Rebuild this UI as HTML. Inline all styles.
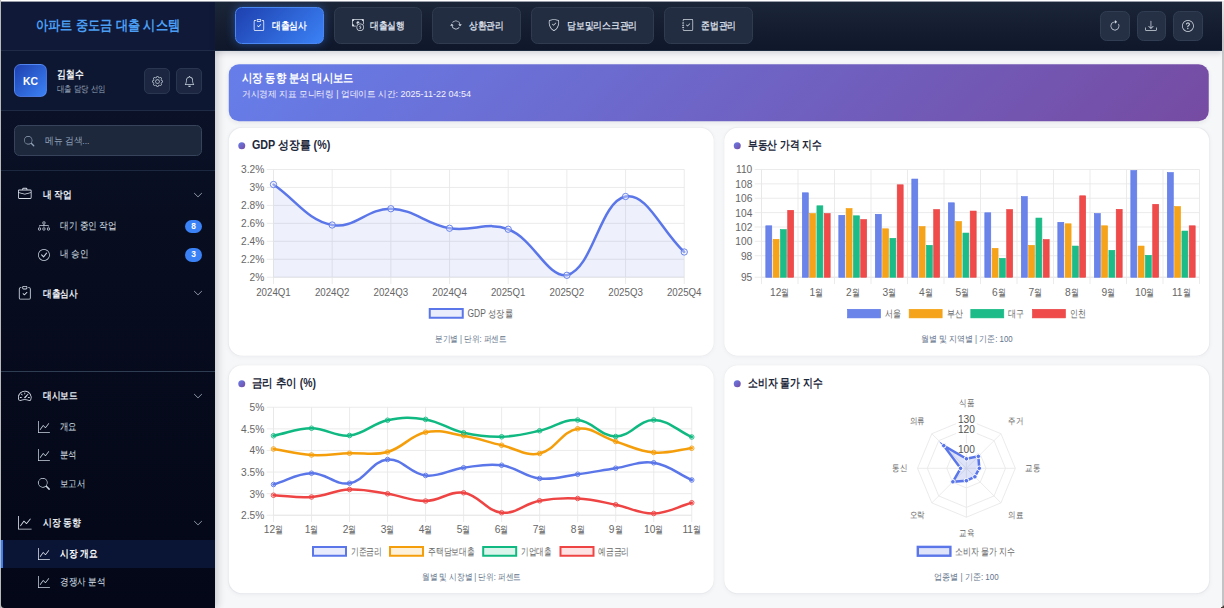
<!DOCTYPE html>
<html lang="ko">
<head>
<meta charset="utf-8">
<title>아파트 중도금 대출 시스템</title>
<style>
*{box-sizing:border-box;margin:0;padding:0}
html,body{width:1224px;height:608px;overflow:hidden}
body{position:relative;background:#f6f7f9;font-family:"Liberation Sans",sans-serif;color:#1e293b}
.abs,.t,.ic{position:absolute}
.t{white-space:nowrap}
.ic{display:block;overflow:visible}
#sidebar{left:1px;top:1px;width:214px;height:607px;background:linear-gradient(180deg,#0d1530 0%,#0b1228 18%,#080d20 35%,#030717 100%);box-shadow:2px 0 9px rgba(15,23,42,.22);border-bottom-left-radius:3.5px}
#sbhead{left:0;top:0;width:214px;height:50px;background:#101a38;border-bottom:1px solid #1f2b47}
#sbuser{left:0;top:50px;width:214px;height:60px;background:#0e1731;border-bottom:1px solid #1f2a44}
#sbsearch{left:0;top:110px;width:214px;height:60px;border-bottom:1px solid #1c2740}
#header{left:215px;top:1px;width:1007px;height:49.5px;background:linear-gradient(180deg,#1c2639 0%,#0f172a 100%);border-bottom:1px solid #1d2b41;box-shadow:0 2px 6px rgba(15,23,42,.17)}
.nb{position:absolute;top:6px;height:37px;border-radius:6.5px;background:#222d41;border:1px solid #303b50}
.nb.on{background:linear-gradient(135deg,#1e40af 0%,#3b82f6 100%);border:1px solid #4a87f3;box-shadow:0 0 10px rgba(59,130,246,.45)}
.hb{position:absolute;top:10px;width:29.5px;height:29.5px;border-radius:6.5px;background:#253045;border:1px solid #313d52}
.ub{position:absolute;top:17.5px;width:26px;height:26px;border-radius:5px;background:#1c2640;border:1px solid #2a354f}
.card{position:absolute;background:#fff;border-radius:13.6px;box-shadow:0 1px 4px rgba(15,23,42,.045),0 0 1px rgba(15,23,42,.04)}
.dot{position:absolute;width:7px;height:7px;border-radius:50%;background:linear-gradient(135deg,#667eea,#764ba2)}
.badge{position:absolute;left:184px;width:17.2px;height:13.4px;border-radius:7px;background:#3b82f6;color:#fff;font-size:8.4px;line-height:13.4px;font-weight:700;text-align:center}
svg text{font-family:"Liberation Sans",sans-serif}
</style>
</head>
<body>
<div class="abs" style="left:0;top:600px;width:6px;height:8px;background:#d2d2d3"></div>

<div id="sidebar" class="abs">
<div id="sbhead" class="abs"></div><div id="sbuser" class="abs"></div><div id="sbsearch" class="abs"></div>
<svg class="t" style="left:33.00px;top:14.12px" width="148.00" height="21.76"><text x="74.00" y="15.23" text-anchor="middle" font-size="13.60" font-weight="700" fill="#4b9ef3" textLength="144.00" lengthAdjust="spacingAndGlyphs">아파트 중도금 대출 시스템</text></svg>
<div class="abs" style="left:13.1px;top:63.3px;width:32.8px;height:32.8px;border-radius:6.5px;background:linear-gradient(135deg,#1e40af 0%,#3b82f6 100%);border:1px solid rgba(120,160,255,.45)"></div>
<svg class="t" style="left:20.00px;top:71.88px" width="19.00" height="16.64"><text x="9.50" y="12.01" text-anchor="middle" font-size="10.40" font-weight="700" fill="#fff" textLength="15.00" lengthAdjust="spacingAndGlyphs">KC</text></svg>
<svg class="t" style="left:54.20px;top:64.82px" width="30.30" height="16.96"><text x="2.00" y="11.87" text-anchor="start" font-size="10.60" font-weight="700" fill="#f1f5f9" textLength="26.30" lengthAdjust="spacingAndGlyphs">김철수</text></svg>
<svg class="t" style="left:54.20px;top:81.08px" width="52.80" height="14.24"><text x="2.00" y="9.97" text-anchor="start" font-size="8.90" font-weight="400" fill="#94a3b8" textLength="48.80" lengthAdjust="spacingAndGlyphs">대출 담당 선임</text></svg>
<div class="ub" style="left:143.2px;top:67.0px"></div>
<div class="ub" style="left:175.0px;top:67.0px"></div>
<svg class="ic" style="left:150.70px;top:74.50px" width="11.00" height="11.00" viewBox="0 0 16 16" fill="#cbd5e1"><path d="M8 4.754a3.246 3.246 0 1 0 0 6.492 3.246 3.246 0 0 0 0-6.492zM5.754 8a2.246 2.246 0 1 1 4.492 0 2.246 2.246 0 0 1-4.492 0z"/><path d="M9.796 1.343c-.527-1.79-3.065-1.79-3.592 0l-.094.319a.873.873 0 0 1-1.255.52l-.292-.16c-1.64-.892-3.433.902-2.54 2.541l.159.292a.873.873 0 0 1-.52 1.255l-.319.094c-1.79.527-1.79 3.065 0 3.592l.319.094a.873.873 0 0 1 .52 1.255l-.16.292c-.892 1.64.901 3.434 2.541 2.54l.292-.159a.873.873 0 0 1 1.255.52l.094.319c.527 1.79 3.065 1.79 3.592 0l.094-.319a.873.873 0 0 1 1.255-.52l.292.16c1.64.893 3.434-.902 2.54-2.541l-.159-.292a.873.873 0 0 1 .52-1.255l.319-.094c1.79-.527 1.79-3.065 0-3.592l-.319-.094a.873.873 0 0 1-.52-1.255l.16-.292c.893-1.64-.902-3.433-2.541-2.54l-.292.159a.873.873 0 0 1-1.255-.52l-.094-.319zm-2.633.283c.246-.835 1.428-.835 1.674 0l.094.319a1.873 1.873 0 0 0 2.693 1.115l.291-.16c.764-.415 1.6.42 1.184 1.185l-.159.292a1.873 1.873 0 0 0 1.116 2.692l.318.094c.835.246.835 1.428 0 1.674l-.319.094a1.873 1.873 0 0 0-1.115 2.693l.16.291c.415.764-.42 1.6-1.185 1.184l-.291-.159a1.873 1.873 0 0 0-2.693 1.116l-.094.318c-.246.835-1.428.835-1.674 0l-.094-.319a1.873 1.873 0 0 0-2.692-1.115l-.292.16c-.764.415-1.6-.42-1.184-1.185l.159-.291A1.873 1.873 0 0 0 1.945 8.93l-.319-.094c-.835-.246-.835-1.428 0-1.674l.319-.094A1.873 1.873 0 0 0 3.06 4.377l-.16-.292c-.415-.764.42-1.6 1.185-1.184l.292.159a1.873 1.873 0 0 0 2.692-1.115l.094-.319z"/></svg>
<svg class="ic" style="left:182.50px;top:74.50px" width="11.00" height="11.00" viewBox="0 0 16 16" fill="#cbd5e1"><path d="M8 16a2 2 0 0 0 2-2H6a2 2 0 0 0 2 2zM8 1.918l-.797.161A4.002 4.002 0 0 0 4 6c0 .628-.134 2.197-.459 3.742-.16.767-.376 1.566-.663 2.258h10.244c-.287-.692-.502-1.49-.663-2.258C12.134 8.197 12 6.628 12 6a4.002 4.002 0 0 0-3.203-3.92L8 1.917zM14.22 12c.223.447.481.801.78 1H1c.299-.199.557-.553.78-1C2.68 10.2 3 6.88 3 6c0-2.42 1.72-4.44 4.005-4.901a1 1 0 1 1 1.99 0A5.002 5.002 0 0 1 13 6c0 .88.32 4.2 1.22 6z"/></svg>
<div class="abs" style="left:13.0px;top:124.0px;width:188px;height:31.4px;border-radius:5.5px;background:#1d283d;border:1px solid #36435a"></div>
<svg class="ic" style="left:22.80px;top:134.50px" width="10.40" height="10.40" viewBox="0 0 16 16" fill="#94a3b8"><path d="M11.742 10.344a6.5 6.5 0 1 0-1.397 1.398h-.001c.03.04.062.078.098.115l3.85 3.85a1 1 0 0 0 1.415-1.414l-3.85-3.85a1.007 1.007 0 0 0-.115-.1zM12 6.5a5.5 5.5 0 1 1-11 0 5.5 5.5 0 0 1 11 0z"/></svg>
<svg class="t" style="left:41.50px;top:131.66px" width="48.50" height="15.68"><text x="2.00" y="10.98" text-anchor="start" font-size="9.80" font-weight="400" fill="#94a3b8" textLength="44.50" lengthAdjust="spacingAndGlyphs">메뉴 검색...</text></svg>
<svg class="ic" style="left:17.00px;top:186.40px" width="13.60" height="13.60" viewBox="0 0 16 16" fill="#d5dce6"><path d="M6.5 1A1.5 1.5 0 0 0 5 2.5V3H1.500A1.500 1.500 0 0 0 0 4.500v8A1.500 1.500 0 0 0 1.500 14h13a1.500 1.500 0 0 0 1.500-1.500v-8A1.500 1.500 0 0 0 14.500 3H11v-.5A1.500 1.500 0 0 0 9.500 1h-3zm0 1h3a.5.5 0 0 1 .5.5V3H6v-.5a.5.5 0 0 1 .5-.5zm1.886 6.914L15 7.151V12.500a.5.5 0 0 1-.5.5h-13a.5.5 0 0 1-.5-.5V7.150l6.614 1.764a1.500 1.500 0 0 0 .772 0zM1.500 4h13a.5.5 0 0 1 .5.5v1.616L8.129 7.948a.5.5 0 0 1-.258 0L1 6.116V4.500a.5.5 0 0 1 .5-.5z"/></svg>
<svg class="t" style="left:40.00px;top:184.96px" width="32.60" height="16.48"><text x="2.00" y="11.54" text-anchor="start" font-size="10.30" font-weight="600" fill="#e8edf3" textLength="28.60" lengthAdjust="spacingAndGlyphs">내 작업</text></svg>
<svg class="ic" style="left:192.00px;top:188.50px" width="10.00" height="10.00" viewBox="0 0 16 16" fill="#c3ccd9"><path fill-rule="evenodd" d="M1.646 4.646a.5.5 0 0 1 .708 0L8 10.293l5.646-5.647a.5.5 0 0 1 .708.708l-6 6a.5.5 0 0 1-.708 0l-6-6a.5.5 0 0 1 0-.708z"/></svg>
<svg class="ic" style="left:37.05px;top:218.85px" width="11.90" height="11.90" viewBox="0 0 16 16" fill="#cbd5e1"><path fill-rule="evenodd" d="M6 3.500A1.500 1.500 0 0 1 7.500 2h1A1.500 1.500 0 0 1 10 3.500v1A1.500 1.500 0 0 1 8.500 6v1H14a.5.5 0 0 1 .5.5v1a.5.5 0 0 1-1 0V8h-5v.5a.5.5 0 0 1-1 0V8h-5v.5a.5.5 0 0 1-1 0v-1A.5.5 0 0 1 2 7h5.500V6A1.500 1.500 0 0 1 6 4.500v-1zM8.500 5a.5.5 0 0 0 .5-.5v-1a.5.5 0 0 0-.5-.5h-1a.5.5 0 0 0-.5.5v1a.5.5 0 0 0 .5.5h1zM0 11.500A1.500 1.500 0 0 1 1.500 10h1A1.500 1.500 0 0 1 4 11.500v1A1.500 1.500 0 0 1 2.500 14h-1A1.500 1.500 0 0 1 0 12.500v-1zm1.500-.5a.5.5 0 0 0-.5.5v1a.5.5 0 0 0 .5.5h1a.5.5 0 0 0 .5-.5v-1a.5.5 0 0 0-.5-.5h-1zm4.500.5A1.500 1.500 0 0 1 7.500 10h1a1.500 1.500 0 0 1 1.500 1.500v1A1.500 1.500 0 0 1 8.500 14h-1A1.500 1.500 0 0 1 6 12.500v-1zm1.500-.5a.5.5 0 0 0-.5.5v1a.5.5 0 0 0 .5.5h1a.5.5 0 0 0 .5-.5v-1a.5.5 0 0 0-.5-.5h-1zm4.500.5a1.500 1.500 0 0 1 1.500-1.500h1a1.500 1.500 0 0 1 1.500 1.500v1a1.500 1.500 0 0 1-1.500 1.500h-1a1.500 1.500 0 0 1-1.500-1.500v-1zm1.500-.5a.5.5 0 0 0-.5.5v1a.5.5 0 0 0 .5.5h1a.5.5 0 0 0 .5-.5v-1a.5.5 0 0 0-.5-.5h-1z"/></svg>
<svg class="t" style="left:56.70px;top:216.64px" width="60.80" height="16.32"><text x="2.00" y="11.42" text-anchor="start" font-size="10.20" font-weight="500" fill="#dbe2ec" textLength="56.80" lengthAdjust="spacingAndGlyphs">대기 중인 작업</text></svg>
<div class="badge" style="top:218.50px">8</div>
<svg class="ic" style="left:37.05px;top:247.55px" width="11.90" height="11.90" viewBox="0 0 16 16" fill="#cbd5e1"><path d="M8 15A7 7 0 1 1 8 1a7 7 0 0 1 0 14zm0 1A8 8 0 1 0 8 0a8 8 0 0 0 0 16z"/><path d="M10.97 4.97a.235.235 0 0 0-.02.022L7.477 9.417 5.384 7.323a.75.75 0 0 0-1.06 1.06L6.97 11.03a.75.75 0 0 0 1.079-.02l3.992-4.99a.75.75 0 0 0-1.071-1.05z"/></svg>
<svg class="t" style="left:56.70px;top:245.34px" width="32.20" height="16.32"><text x="2.00" y="11.42" text-anchor="start" font-size="10.20" font-weight="500" fill="#dbe2ec" textLength="28.20" lengthAdjust="spacingAndGlyphs">내 승인</text></svg>
<div class="badge" style="top:247.20px">3</div>
<svg class="ic" style="left:17.00px;top:285.20px" width="13.60" height="13.60" viewBox="0 0 16 16" fill="#d5dce6"><path fill-rule="evenodd" d="M10.854 7.146a.5.5 0 0 1 0 .708l-3 3a.5.5 0 0 1-.708 0l-1.500-1.500a.5.5 0 1 1 .708-.708L7.500 9.793l2.646-2.647a.5.5 0 0 1 .708 0z"/><path d="M4 1.500H3a2 2 0 0 0-2 2V14a2 2 0 0 0 2 2h10a2 2 0 0 0 2-2V3.500a2 2 0 0 0-2-2h-1v1h1a1 1 0 0 1 1 1V14a1 1 0 0 1-1 1H3a1 1 0 0 1-1-1V3.500a1 1 0 0 1 1-1h1v-1z"/><path d="M9.500 1a.5.5 0 0 1 .5.5v1a.5.5 0 0 1-.5.5h-3a.5.5 0 0 1-.5-.5v-1a.5.5 0 0 1 .5-.5h3zm-3-1A1.500 1.500 0 0 0 5 1.500v1A1.500 1.500 0 0 0 6.500 4h3A1.500 1.500 0 0 0 11 2.500v-1A1.500 1.500 0 0 0 9.500 0h-3z"/></svg>
<svg class="t" style="left:40.00px;top:283.76px" width="38.60" height="16.48"><text x="2.00" y="11.54" text-anchor="start" font-size="10.30" font-weight="600" fill="#e8edf3" textLength="34.60" lengthAdjust="spacingAndGlyphs">대출심사</text></svg>
<svg class="ic" style="left:192.00px;top:287.30px" width="10.00" height="10.00" viewBox="0 0 16 16" fill="#c3ccd9"><path fill-rule="evenodd" d="M1.646 4.646a.5.5 0 0 1 .708 0L8 10.293l5.646-5.647a.5.5 0 0 1 .708.708l-6 6a.5.5 0 0 1-.708 0l-6-6a.5.5 0 0 1 0-.708z"/></svg>
<div class="abs" style="left:0;top:370.0px;width:214px;height:1px;background:#2f3d52"></div>
<svg class="ic" style="left:17.00px;top:387.50px" width="13.60" height="13.60" viewBox="0 0 16 16" fill="#d5dce6"><path d="M8 4a.5.5 0 0 1 .5.5V6a.5.5 0 0 1-1 0V4.500A.5.5 0 0 1 8 4zM3.732 5.732a.5.5 0 0 1 .707 0l.915.914a.5.5 0 1 1-.708.708l-.914-.915a.5.5 0 0 1 0-.707zM2 10a.5.5 0 0 1 .5-.5h1.586a.5.5 0 0 1 0 1H2.500A.5.5 0 0 1 2 10zm9.500 0a.5.5 0 0 1 .5-.5h1.500a.5.5 0 0 1 0 1H12a.5.5 0 0 1-.5-.5zm.754-4.246a.389.389 0 0 0-.527-.02L7.547 9.310a.91.91 0 1 0 1.302 1.258l3.434-4.297a.389.389 0 0 0-.029-.518z"/><path fill-rule="evenodd" d="M0 10a8 8 0 1 1 15.547 2.661c-.442 1.253-1.845 1.602-2.932 1.250C11.309 13.488 9.475 13 8 13c-1.474 0-3.310.488-4.615.911-1.087.352-2.490.003-2.932-1.250A7.988 7.988 0 0 1 0 10zm8-7a7 7 0 0 0-6.603 9.329c.203.575.923.876 1.680.630C4.397 12.533 6.358 12 8 12s3.604.532 4.923.960c.757.245 1.477-.056 1.680-.631A7 7 0 0 0 8 3z"/></svg>
<svg class="t" style="left:40.00px;top:386.06px" width="38.60" height="16.48"><text x="2.00" y="11.54" text-anchor="start" font-size="10.30" font-weight="600" fill="#e8edf3" textLength="34.60" lengthAdjust="spacingAndGlyphs">대시보드</text></svg>
<svg class="ic" style="left:192.00px;top:389.60px" width="10.00" height="10.00" viewBox="0 0 16 16" fill="#c3ccd9"><path fill-rule="evenodd" d="M1.646 4.646a.5.5 0 0 1 .708 0L8 10.293l5.646-5.647a.5.5 0 0 1 .708.708l-6 6a.5.5 0 0 1-.708 0l-6-6a.5.5 0 0 1 0-.708z"/></svg>
<svg class="ic" style="left:37.05px;top:419.85px" width="11.90" height="11.90" viewBox="0 0 16 16" fill="#cbd5e1"><path fill-rule="evenodd" d="M0 0h1v15h15v1H0V0Zm14.817 3.113a.5.5 0 0 1 .07.704l-4.500 5.500a.5.5 0 0 1-.74.037L7.060 6.767l-3.656 5.027a.5.5 0 0 1-.808-.588l4-5.500a.5.5 0 0 1 .758-.06l2.609 2.610 4.150-5.073a.5.5 0 0 1 .704-.07Z"/></svg>
<svg class="t" style="left:56.70px;top:417.64px" width="20.80" height="16.32"><text x="2.00" y="11.42" text-anchor="start" font-size="10.20" font-weight="500" fill="#dbe2ec" textLength="16.80" lengthAdjust="spacingAndGlyphs">개요</text></svg>
<svg class="ic" style="left:37.05px;top:448.35px" width="11.90" height="11.90" viewBox="0 0 16 16" fill="#cbd5e1"><path fill-rule="evenodd" d="M0 0h1v15h15v1H0V0Zm14.817 3.113a.5.5 0 0 1 .07.704l-4.500 5.500a.5.5 0 0 1-.74.037L7.060 6.767l-3.656 5.027a.5.5 0 0 1-.808-.588l4-5.500a.5.5 0 0 1 .758-.06l2.609 2.610 4.150-5.073a.5.5 0 0 1 .704-.07Z"/></svg>
<svg class="t" style="left:56.70px;top:446.14px" width="20.80" height="16.32"><text x="2.00" y="11.42" text-anchor="start" font-size="10.20" font-weight="500" fill="#dbe2ec" textLength="16.80" lengthAdjust="spacingAndGlyphs">분석</text></svg>
<svg class="ic" style="left:37.05px;top:476.85px" width="11.90" height="11.90" viewBox="0 0 16 16" fill="#cbd5e1"><path d="M11.742 10.344a6.5 6.5 0 1 0-1.397 1.398h-.001c.03.04.062.078.098.115l3.85 3.85a1 1 0 0 0 1.415-1.414l-3.85-3.85a1.007 1.007 0 0 0-.115-.1zM12 6.5a5.5 5.5 0 1 1-11 0 5.5 5.5 0 0 1 11 0z"/></svg>
<svg class="t" style="left:56.70px;top:474.64px" width="29.40" height="16.32"><text x="2.00" y="11.42" text-anchor="start" font-size="10.20" font-weight="500" fill="#dbe2ec" textLength="25.40" lengthAdjust="spacingAndGlyphs">보고서</text></svg>
<svg class="ic" style="left:17.00px;top:514.70px" width="13.60" height="13.60" viewBox="0 0 16 16" fill="#d5dce6"><path fill-rule="evenodd" d="M0 0h1v15h15v1H0V0Zm14.817 3.113a.5.5 0 0 1 .07.704l-4.500 5.500a.5.5 0 0 1-.74.037L7.060 6.767l-3.656 5.027a.5.5 0 0 1-.808-.588l4-5.500a.5.5 0 0 1 .758-.06l2.609 2.610 4.150-5.073a.5.5 0 0 1 .704-.07Z"/></svg>
<svg class="t" style="left:40.00px;top:513.26px" width="41.90" height="16.48"><text x="2.00" y="11.54" text-anchor="start" font-size="10.30" font-weight="600" fill="#e8edf3" textLength="37.90" lengthAdjust="spacingAndGlyphs">시장 동향</text></svg>
<svg class="ic" style="left:192.00px;top:516.80px" width="10.00" height="10.00" viewBox="0 0 16 16" fill="#c3ccd9"><path fill-rule="evenodd" d="M1.646 4.646a.5.5 0 0 1 .708 0L8 10.293l5.646-5.647a.5.5 0 0 1 .708.708l-6 6a.5.5 0 0 1-.708 0l-6-6a.5.5 0 0 1 0-.708z"/></svg>
<div class="abs" style="left:0;top:538.70px;width:214px;height:28.6px;background:#0a1434"></div>
<div class="abs" style="left:0;top:538.70px;width:2.4px;height:28.6px;background:#3b82f6"></div>
<svg class="ic" style="left:37.05px;top:547.05px" width="11.90" height="11.90" viewBox="0 0 16 16" fill="#e2e8f0"><path fill-rule="evenodd" d="M0 0h1v15h15v1H0V0Zm14.817 3.113a.5.5 0 0 1 .07.704l-4.500 5.500a.5.5 0 0 1-.74.037L7.060 6.767l-3.656 5.027a.5.5 0 0 1-.808-.588l4-5.500a.5.5 0 0 1 .758-.06l2.609 2.610 4.150-5.073a.5.5 0 0 1 .704-.07Z"/></svg>
<svg class="t" style="left:56.70px;top:544.84px" width="41.20" height="16.32"><text x="2.00" y="11.42" text-anchor="start" font-size="10.20" font-weight="700" fill="#ffffff" textLength="37.20" lengthAdjust="spacingAndGlyphs">시장 개요</text></svg>
<svg class="ic" style="left:37.05px;top:575.35px" width="11.90" height="11.90" viewBox="0 0 16 16" fill="#cbd5e1"><path fill-rule="evenodd" d="M0 0h1v15h15v1H0V0Zm14.817 3.113a.5.5 0 0 1 .07.704l-4.500 5.500a.5.5 0 0 1-.74.037L7.060 6.767l-3.656 5.027a.5.5 0 0 1-.808-.588l4-5.500a.5.5 0 0 1 .758-.06l2.609 2.610 4.150-5.073a.5.5 0 0 1 .704-.07Z"/></svg>
<svg class="t" style="left:56.70px;top:573.14px" width="49.40" height="16.32"><text x="2.00" y="11.42" text-anchor="start" font-size="10.20" font-weight="500" fill="#dbe2ec" textLength="45.40" lengthAdjust="spacingAndGlyphs">경쟁사 분석</text></svg>
</div>
<div id="header" class="abs">
<div class="nb on" style="left:20.00px;width:89.20px"></div>
<svg class="ic" style="left:37.55px;top:18.25px" width="11.90" height="11.90" viewBox="0 0 16 16" fill="#fff"><path fill-rule="evenodd" d="M10.854 7.146a.5.5 0 0 1 0 .708l-3 3a.5.5 0 0 1-.708 0l-1.500-1.500a.5.5 0 1 1 .708-.708L7.500 9.793l2.646-2.647a.5.5 0 0 1 .708 0z"/><path d="M4 1.500H3a2 2 0 0 0-2 2V14a2 2 0 0 0 2 2h10a2 2 0 0 0 2-2V3.500a2 2 0 0 0-2-2h-1v1h1a1 1 0 0 1 1 1V14a1 1 0 0 1-1 1H3a1 1 0 0 1-1-1V3.500a1 1 0 0 1 1-1h1v-1z"/><path d="M9.500 1a.5.5 0 0 1 .5.5v1a.5.5 0 0 1-.5.5h-3a.5.5 0 0 1-.5-.5v-1a.5.5 0 0 1 .5-.5h3zm-3-1A1.500 1.500 0 0 0 5 1.500v1A1.500 1.500 0 0 0 6.500 4h3A1.500 1.500 0 0 0 11 2.500v-1A1.500 1.500 0 0 0 9.500 0h-3z"/></svg>
<svg class="t" style="left:54.70px;top:16.52px" width="38.90" height="16.16"><text x="2.00" y="11.31" text-anchor="start" font-size="10.10" font-weight="700" fill="#fff" textLength="34.90" lengthAdjust="spacingAndGlyphs">대출심사</text></svg>
<div class="nb" style="left:118.90px;width:88.30px"></div>
<svg class="ic" style="left:136.55px;top:18.25px" width="11.90" height="11.90" viewBox="0 0 16 16" fill="#d3dae4"><path fill-rule="evenodd" d="M11 15a4 4 0 1 0 0-8 4 4 0 0 0 0 8zm5-4a5 5 0 1 1-10 0 5 5 0 0 1 10 0z"/><path d="M9.438 11.944c.047.596.518 1.06 1.363 1.116v.44h.375v-.443c.875-.061 1.386-.529 1.386-1.207 0-.618-.39-.936-1.09-1.100l-.296-.07v-1.200c.376.043.614.248.671.532h.658c-.047-.575-.54-1.024-1.329-1.073V8.500h-.375v.45c-.747.073-1.255.522-1.255 1.158 0 .562.378.92 1.007 1.066l.248.061v1.272c-.384-.058-.639-.27-.696-.563h-.668zm1.360-1.354c-.369-.085-.569-.26-.569-.522 0-.294.216-.514.572-.578v1.100h-.003zm.432.746c.449.104.655.272.655.569 0 .339-.257.571-.709.614v-1.195l.054.012z"/><path d="M1 0a1 1 0 0 0-1 1v8a1 1 0 0 0 1 1h4.083c.058-.344.145-.678.258-1H3a2 2 0 0 0-2-2V3a2 2 0 0 0 2-2h10a2 2 0 0 0 2 2v3.528c.38.34.717.728 1 1.154V1a1 1 0 0 0-1-1H1z"/><path d="M9.998 5.083 10 5a2 2 0 1 0-3.132 1.650 5.982 5.982 0 0 1 3.130-1.567z"/></svg>
<svg class="t" style="left:153.40px;top:16.52px" width="38.80" height="16.16"><text x="2.00" y="11.31" text-anchor="start" font-size="10.10" font-weight="600" fill="#d3dae4" textLength="34.80" lengthAdjust="spacingAndGlyphs">대출실행</text></svg>
<div class="nb" style="left:217.20px;width:88.70px"></div>
<svg class="ic" style="left:234.75px;top:18.25px" width="11.90" height="11.90" viewBox="0 0 16 16" fill="#d3dae4"><path d="M11.534 7h3.932a.25.25 0 0 1 .192.41l-1.966 2.360a.25.25 0 0 1-.384 0l-1.966-2.360a.25.25 0 0 1 .192-.41zm-11 2h3.932a.25.25 0 0 0 .192-.41L2.692 6.230a.25.25 0 0 0-.384 0L.342 8.590A.25.25 0 0 0 .534 9z"/><path fill-rule="evenodd" d="M8 3c-1.552 0-2.940.707-3.857 1.818a.5.5 0 1 1-.771-.636A6.002 6.002 0 0 1 13.917 7H12.900A5.002 5.002 0 0 0 8 3zM3.100 9a5.002 5.002 0 0 0 8.757 2.182.5.5 0 1 1 .771.636A6.002 6.002 0 0 1 2.083 9H3.100z"/></svg>
<svg class="t" style="left:252.00px;top:16.52px" width="38.70" height="16.16"><text x="2.00" y="11.31" text-anchor="start" font-size="10.10" font-weight="600" fill="#d3dae4" textLength="34.70" lengthAdjust="spacingAndGlyphs">상환관리</text></svg>
<div class="nb" style="left:315.80px;width:123.30px"></div>
<svg class="ic" style="left:333.05px;top:18.25px" width="11.90" height="11.90" viewBox="0 0 16 16" fill="#d3dae4"><path d="M5.338 1.590a61.440 61.440 0 0 0-2.837.856.481.481 0 0 0-.328.39c-.554 4.157.726 7.190 2.253 9.188a10.725 10.725 0 0 0 2.287 2.233c.346.244.652.42.893.533.12.057.218.095.293.118a.55.55 0 0 0 .101.025.615.615 0 0 0 .1-.025c.076-.023.174-.061.294-.118.24-.113.547-.29.893-.533a10.726 10.726 0 0 0 2.287-2.233c1.527-1.997 2.807-5.031 2.253-9.188a.48.48 0 0 0-.328-.39c-.651-.213-1.750-.56-2.837-.855C9.552 1.290 8.531 1.067 8 1.067c-.53 0-1.552.223-2.662.524zM5.072.560C6.157.265 7.310 0 8 0s1.843.265 2.928.560c1.110.3 2.229.655 2.887.87a1.540 1.540 0 0 1 1.044 1.262c.596 4.477-.787 7.795-2.465 9.990a11.775 11.775 0 0 1-2.517 2.453 7.159 7.159 0 0 1-1.048.625c-.28.132-.581.24-.829.24s-.548-.108-.829-.24a7.158 7.158 0 0 1-1.048-.625 11.777 11.777 0 0 1-2.517-2.453C1.928 10.487.545 7.169 1.141 2.692A1.540 1.540 0 0 1 2.185 1.430 62.456 62.456 0 0 1 5.072.560z"/><path d="M10.854 5.146a.5.5 0 0 1 0 .708l-3 3a.5.5 0 0 1-.708 0l-1.500-1.500a.5.5 0 1 1 .708-.708L7.500 7.793l2.646-2.647a.5.5 0 0 1 .708 0z"/></svg>
<svg class="t" style="left:349.60px;top:16.52px" width="74.20" height="16.16"><text x="2.00" y="11.31" text-anchor="start" font-size="10.10" font-weight="600" fill="#d3dae4" textLength="70.20" lengthAdjust="spacingAndGlyphs">담보및리스크관리</text></svg>
<div class="nb" style="left:449.10px;width:88.70px"></div>
<svg class="ic" style="left:466.65px;top:18.25px" width="11.90" height="11.90" viewBox="0 0 16 16" fill="#d3dae4"><path fill-rule="evenodd" d="M10.854 6.146a.5.5 0 0 1 0 .708l-3 3a.5.5 0 0 1-.708 0l-1.500-1.500a.5.5 0 1 1 .708-.708L7.500 8.793l2.646-2.647a.5.5 0 0 1 .708 0z"/><path d="M3 0h10a2 2 0 0 1 2 2v12a2 2 0 0 1-2 2H3a2 2 0 0 1-2-2v-1h1v1a1 1 0 0 0 1 1h10a1 1 0 0 0 1-1V2a1 1 0 0 0-1-1H3a1 1 0 0 0-1 1v1H1V2a2 2 0 0 1 2-2z"/><path d="M1 5v-.5a.5.5 0 0 1 1 0V5h.5a.5.5 0 0 1 0 1h-2a.5.5 0 0 1 0-1H1zm0 3v-.5a.5.5 0 0 1 1 0V8h.5a.5.5 0 0 1 0 1h-2a.5.5 0 0 1 0-1H1zm0 3v-.5a.5.5 0 0 1 1 0v.5h.5a.5.5 0 0 1 0 1h-2a.5.5 0 0 1 0-1H1z"/></svg>
<svg class="t" style="left:483.60px;top:16.52px" width="39.00" height="16.16"><text x="2.00" y="11.31" text-anchor="start" font-size="10.10" font-weight="600" fill="#d3dae4" textLength="35.00" lengthAdjust="spacingAndGlyphs">준법관리</text></svg>
<div class="hb" style="left:885.30px"></div>
<svg class="ic" style="left:894.10px;top:18.75px" width="11.90" height="11.90" viewBox="0 0 16 16" fill="#d3dae4"><path fill-rule="evenodd" d="M8 3a5 5 0 1 0 4.546 2.914.5.5 0 0 1 .908-.417A6 6 0 1 1 8 2v1z"/><path d="M8 4.466V.534a.25.25 0 0 1 .41-.192l2.360 1.966c.12.1.12.284 0 .384L8.410 4.658A.25.25 0 0 1 8 4.466z"/></svg>
<div class="hb" style="left:921.50px"></div>
<svg class="ic" style="left:930.30px;top:18.75px" width="11.90" height="11.90" viewBox="0 0 16 16" fill="#d3dae4"><path d="M.5 9.900a.5.5 0 0 1 .5.5v2.500a1 1 0 0 0 1 1h12a1 1 0 0 0 1-1v-2.500a.5.5 0 0 1 1 0v2.500a2 2 0 0 1-2 2H2a2 2 0 0 1-2-2v-2.500a.5.5 0 0 1 .5-.5z"/><path d="M7.646 11.854a.5.5 0 0 0 .708 0l3-3a.5.5 0 0 0-.708-.708L8.500 10.293V1.500a.5.5 0 0 0-1 0v8.793L5.354 8.146a.5.5 0 1 0-.708.708l3 3z"/></svg>
<div class="hb" style="left:958.00px"></div>
<svg class="ic" style="left:966.80px;top:18.75px" width="11.90" height="11.90" viewBox="0 0 16 16" fill="#d3dae4"><path d="M8 15A7 7 0 1 1 8 1a7 7 0 0 1 0 14zm0 1A8 8 0 1 0 8 0a8 8 0 0 0 0 16z"/><path d="M5.255 5.786a.237.237 0 0 0 .241.247h.825c.138 0 .248-.113.266-.25.09-.656.54-1.134 1.342-1.134.686 0 1.314.343 1.314 1.168 0 .635-.374.927-.965 1.371-.673.489-1.206 1.060-1.168 1.987l.003.217a.25.25 0 0 0 .25.246h.811a.25.25 0 0 0 .25-.25v-.105c0-.718.273-.927 1.010-1.486.609-.463 1.244-.977 1.244-2.056 0-1.511-1.276-2.241-2.673-2.241-1.267 0-2.655.59-2.750 2.286zm1.557 5.763c0 .533.425.927 1.010.927.609 0 1.028-.394 1.028-.927 0-.552-.42-.94-1.029-.94-.584 0-1.009.388-1.009.94z"/></svg>
</div>
<div class="abs" style="left:0;top:0;width:1224px;height:2px;background:linear-gradient(180deg,#fff 0,#fff 1px,#9a9eab 1px,#9a9eab 2px)"></div>
<div class="abs" style="left:0;top:0;width:1px;height:608px;background:#b9b9b9"></div>
<div class="abs" style="left:1222px;top:1px;width:2px;height:607px;background:linear-gradient(180deg,#e9e9ea 0,#c6c6c8 40px,#c3c3c5 100%)"></div>
<div class="abs" style="left:228px;top:64px;width:980px;height:56.8px;transform:translate(.75px,.25px);border-radius:10.2px;background:linear-gradient(135deg,#667eea 0%,#764ba2 100%);box-shadow:0 1px 4px rgba(15,23,42,.07)"></div>
<svg class="t" style="left:240.00px;top:68.68px" width="115.50" height="19.04"><text x="2.00" y="13.33" text-anchor="start" font-size="11.90" font-weight="700" fill="#fff" textLength="111.50" lengthAdjust="spacingAndGlyphs">시장 동향 분석 대시보드</text></svg>
<svg class="t" style="left:240.00px;top:86.82px" width="233.00" height="14.96"><text x="2.00" y="10.47" text-anchor="start" font-size="9.35" font-weight="400" fill="#f3f2fb" textLength="229.00" lengthAdjust="spacingAndGlyphs">거시경제 지표 모니터링 | 업데이트 시간: 2025-11-22 04:54</text></svg>
<div class="card" style="left:228px;top:127px;width:485px;height:228px;transform:translate(0.75px,0.75px)"></div>
<div class="dot" style="left:238px;top:142px;transform:translate(0.25px,0.15px)"></div>
<svg class="t" style="left:250.05px;top:136.18px" width="82.30" height="19.04"><text x="2.00" y="13.33" text-anchor="start" font-size="11.90" font-weight="700" fill="#1e293b" textLength="78.30" lengthAdjust="spacingAndGlyphs">GDP 성장률 (%)</text></svg>
<svg class="t" style="left:433.45px;top:332.28px" width="75.60" height="14.24"><text x="37.80" y="9.97" text-anchor="middle" font-size="8.90" font-weight="400" fill="#64748b" textLength="71.60" lengthAdjust="spacingAndGlyphs">분기별 | 단위: 퍼센트</text></svg>
<div class="card" style="left:724px;top:127px;width:485px;height:228px;transform:translate(0.25px,0.75px)"></div>
<div class="dot" style="left:733px;top:142px;transform:translate(0.75px,0.15px)"></div>
<svg class="t" style="left:745.55px;top:136.18px" width="77.40" height="19.04"><text x="2.00" y="13.33" text-anchor="start" font-size="11.90" font-weight="700" fill="#1e293b" textLength="73.40" lengthAdjust="spacingAndGlyphs">부동산 가격 지수</text></svg>
<svg class="t" style="left:918.95px;top:332.28px" width="95.60" height="14.24"><text x="47.80" y="9.97" text-anchor="middle" font-size="8.90" font-weight="400" fill="#64748b" textLength="91.60" lengthAdjust="spacingAndGlyphs">월별 및 지역별 | 기준: 100</text></svg>
<div class="card" style="left:228px;top:365px;width:485px;height:228px;transform:translate(0.75px,0.35px)"></div>
<div class="dot" style="left:238px;top:380px;transform:translate(0.25px,0.15px)"></div>
<svg class="t" style="left:250.05px;top:374.18px" width="67.90" height="19.04"><text x="2.00" y="13.33" text-anchor="start" font-size="11.90" font-weight="700" fill="#1e293b" textLength="63.90" lengthAdjust="spacingAndGlyphs">금리 추이 (%)</text></svg>
<svg class="t" style="left:419.80px;top:570.28px" width="102.90" height="14.24"><text x="51.45" y="9.97" text-anchor="middle" font-size="8.90" font-weight="400" fill="#64748b" textLength="98.90" lengthAdjust="spacingAndGlyphs">월별 및 시장별 | 단위: 퍼센트</text></svg>
<div class="card" style="left:724px;top:365px;width:485px;height:228px;transform:translate(0.25px,0.35px)"></div>
<div class="dot" style="left:733px;top:380px;transform:translate(0.75px,0.15px)"></div>
<svg class="t" style="left:745.55px;top:374.18px" width="78.40" height="19.04"><text x="2.00" y="13.33" text-anchor="start" font-size="11.90" font-weight="700" fill="#1e293b" textLength="74.40" lengthAdjust="spacingAndGlyphs">소비자 물가 지수</text></svg>
<svg class="t" style="left:932.45px;top:570.28px" width="68.60" height="14.24"><text x="34.30" y="9.97" text-anchor="middle" font-size="8.90" font-weight="400" fill="#64748b" textLength="64.60" lengthAdjust="spacingAndGlyphs">업종별 | 기준: 100</text></svg>
<svg class="abs" style="left:0;top:0" width="1224" height="608" viewBox="0 0 1224 608">
<line x1="273.50" y1="169.50" x2="273.50" y2="277.25" stroke="rgba(0,0,0,0.10)" stroke-width="0.85"/>
<line x1="273.50" y1="277.25" x2="684.25" y2="277.25" stroke="rgba(0,0,0,0.10)" stroke-width="0.85"/>
<line x1="266.70" y1="169.50" x2="684.25" y2="169.50" stroke="#e7e7e7" stroke-width="0.85"/>
<text x="264.30" y="173.42" text-anchor="end" font-size="10.20" fill="#666" font-weight="400">3.2%</text>
<line x1="266.70" y1="187.46" x2="684.25" y2="187.46" stroke="#e7e7e7" stroke-width="0.85"/>
<text x="264.30" y="191.38" text-anchor="end" font-size="10.20" fill="#666" font-weight="400">3%</text>
<line x1="266.70" y1="205.42" x2="684.25" y2="205.42" stroke="#e7e7e7" stroke-width="0.85"/>
<text x="264.30" y="209.34" text-anchor="end" font-size="10.20" fill="#666" font-weight="400">2.8%</text>
<line x1="266.70" y1="223.38" x2="684.25" y2="223.38" stroke="#e7e7e7" stroke-width="0.85"/>
<text x="264.30" y="227.30" text-anchor="end" font-size="10.20" fill="#666" font-weight="400">2.6%</text>
<line x1="266.70" y1="241.33" x2="684.25" y2="241.33" stroke="#e7e7e7" stroke-width="0.85"/>
<text x="264.30" y="245.25" text-anchor="end" font-size="10.20" fill="#666" font-weight="400">2.4%</text>
<line x1="266.70" y1="259.29" x2="684.25" y2="259.29" stroke="#e7e7e7" stroke-width="0.85"/>
<text x="264.30" y="263.21" text-anchor="end" font-size="10.20" fill="#666" font-weight="400">2.2%</text>
<line x1="266.70" y1="277.25" x2="684.25" y2="277.25" stroke="#e7e7e7" stroke-width="0.85"/>
<text x="264.30" y="281.17" text-anchor="end" font-size="10.20" fill="#666" font-weight="400">2%</text>
<line x1="273.50" y1="169.50" x2="273.50" y2="284.05" stroke="#e7e7e7" stroke-width="0.85"/>
<text x="273.50" y="295.72" text-anchor="middle" font-size="10.20" fill="#666" font-weight="400" textLength="34.60" lengthAdjust="spacingAndGlyphs">2024Q1</text>
<line x1="332.18" y1="169.50" x2="332.18" y2="284.05" stroke="#e7e7e7" stroke-width="0.85"/>
<text x="332.18" y="295.72" text-anchor="middle" font-size="10.20" fill="#666" font-weight="400" textLength="34.60" lengthAdjust="spacingAndGlyphs">2024Q2</text>
<line x1="390.86" y1="169.50" x2="390.86" y2="284.05" stroke="#e7e7e7" stroke-width="0.85"/>
<text x="390.86" y="295.72" text-anchor="middle" font-size="10.20" fill="#666" font-weight="400" textLength="34.60" lengthAdjust="spacingAndGlyphs">2024Q3</text>
<line x1="449.54" y1="169.50" x2="449.54" y2="284.05" stroke="#e7e7e7" stroke-width="0.85"/>
<text x="449.54" y="295.72" text-anchor="middle" font-size="10.20" fill="#666" font-weight="400" textLength="34.60" lengthAdjust="spacingAndGlyphs">2024Q4</text>
<line x1="508.21" y1="169.50" x2="508.21" y2="284.05" stroke="#e7e7e7" stroke-width="0.85"/>
<text x="508.21" y="295.72" text-anchor="middle" font-size="10.20" fill="#666" font-weight="400" textLength="34.60" lengthAdjust="spacingAndGlyphs">2025Q1</text>
<line x1="566.89" y1="169.50" x2="566.89" y2="284.05" stroke="#e7e7e7" stroke-width="0.85"/>
<text x="566.89" y="295.72" text-anchor="middle" font-size="10.20" fill="#666" font-weight="400" textLength="34.60" lengthAdjust="spacingAndGlyphs">2025Q2</text>
<line x1="625.57" y1="169.50" x2="625.57" y2="284.05" stroke="#e7e7e7" stroke-width="0.85"/>
<text x="625.57" y="295.72" text-anchor="middle" font-size="10.20" fill="#666" font-weight="400" textLength="34.60" lengthAdjust="spacingAndGlyphs">2025Q3</text>
<line x1="684.25" y1="169.50" x2="684.25" y2="284.05" stroke="#e7e7e7" stroke-width="0.85"/>
<text x="684.25" y="295.72" text-anchor="middle" font-size="10.20" fill="#666" font-weight="400" textLength="34.60" lengthAdjust="spacingAndGlyphs">2025Q4</text>
<path d="M273.50 184.50 C296.97 200.70 306.86 219.77 332.18 225.00 C353.80 229.47 367.57 208.11 390.86 208.75 C414.51 209.41 425.45 224.04 449.54 228.25 C472.39 232.24 487.54 220.96 508.21 229.25 C534.49 239.78 546.63 277.25 566.89 275.30 C593.58 267.85 599.81 201.62 625.57 196.50 C646.75 192.30 660.78 229.80 684.25 252.00 L684.25 277.25 L273.50 277.25 Z" fill="rgba(88,114,229,0.10)"/>
<path d="M273.50 184.50 C296.97 200.70 306.86 219.77 332.18 225.00 C353.80 229.47 367.57 208.11 390.86 208.75 C414.51 209.41 425.45 224.04 449.54 228.25 C472.39 232.24 487.54 220.96 508.21 229.25 C534.49 239.78 546.63 277.25 566.89 275.30 C593.58 267.85 599.81 201.62 625.57 196.50 C646.75 192.30 660.78 229.80 684.25 252.00" fill="none" stroke="#5a76e9" stroke-width="2.5" stroke-linecap="round"/>
<circle cx="273.50" cy="184.50" r="3.15" fill="rgba(255,255,255,0.35)" stroke="#5a76e9" stroke-width="0.9"/>
<circle cx="332.18" cy="225.00" r="3.15" fill="rgba(255,255,255,0.35)" stroke="#5a76e9" stroke-width="0.9"/>
<circle cx="390.86" cy="208.75" r="3.15" fill="rgba(255,255,255,0.35)" stroke="#5a76e9" stroke-width="0.9"/>
<circle cx="449.54" cy="228.25" r="3.15" fill="rgba(255,255,255,0.35)" stroke="#5a76e9" stroke-width="0.9"/>
<circle cx="508.21" cy="229.25" r="3.15" fill="rgba(255,255,255,0.35)" stroke="#5a76e9" stroke-width="0.9"/>
<circle cx="566.89" cy="275.30" r="3.15" fill="rgba(255,255,255,0.35)" stroke="#5a76e9" stroke-width="0.9"/>
<circle cx="625.57" cy="196.50" r="3.15" fill="rgba(255,255,255,0.35)" stroke="#5a76e9" stroke-width="0.9"/>
<circle cx="684.25" cy="252.00" r="3.15" fill="rgba(255,255,255,0.35)" stroke="#5a76e9" stroke-width="0.9"/>
<rect x="429.75" y="309.00" width="33.00" height="8.75" fill="#eaedfc" stroke="#5a76e9" stroke-width="2.00"/>
<text x="467.50" y="316.92" text-anchor="start" font-size="10.20" fill="#666" font-weight="400" textLength="45.30" lengthAdjust="spacingAndGlyphs">GDP 성장률</text>
<line x1="761.50" y1="169.50" x2="761.50" y2="277.25" stroke="rgba(0,0,0,0.10)" stroke-width="0.85"/>
<line x1="761.50" y1="277.25" x2="1199.50" y2="277.25" stroke="rgba(0,0,0,0.10)" stroke-width="0.85"/>
<line x1="754.70" y1="169.50" x2="1199.50" y2="169.50" stroke="#e7e7e7" stroke-width="0.85"/>
<text x="752.30" y="173.42" text-anchor="end" font-size="10.20" fill="#666" font-weight="400">110</text>
<line x1="754.70" y1="183.87" x2="1199.50" y2="183.87" stroke="#e7e7e7" stroke-width="0.85"/>
<text x="752.30" y="187.79" text-anchor="end" font-size="10.20" fill="#666" font-weight="400">108</text>
<line x1="754.70" y1="198.23" x2="1199.50" y2="198.23" stroke="#e7e7e7" stroke-width="0.85"/>
<text x="752.30" y="202.15" text-anchor="end" font-size="10.20" fill="#666" font-weight="400">106</text>
<line x1="754.70" y1="212.60" x2="1199.50" y2="212.60" stroke="#e7e7e7" stroke-width="0.85"/>
<text x="752.30" y="216.52" text-anchor="end" font-size="10.20" fill="#666" font-weight="400">104</text>
<line x1="754.70" y1="226.97" x2="1199.50" y2="226.97" stroke="#e7e7e7" stroke-width="0.85"/>
<text x="752.30" y="230.89" text-anchor="end" font-size="10.20" fill="#666" font-weight="400">102</text>
<line x1="754.70" y1="241.33" x2="1199.50" y2="241.33" stroke="#e7e7e7" stroke-width="0.85"/>
<text x="752.30" y="245.25" text-anchor="end" font-size="10.20" fill="#666" font-weight="400">100</text>
<line x1="754.70" y1="255.70" x2="1199.50" y2="255.70" stroke="#e7e7e7" stroke-width="0.85"/>
<text x="752.30" y="259.62" text-anchor="end" font-size="10.20" fill="#666" font-weight="400">98</text>
<line x1="754.70" y1="277.25" x2="1199.50" y2="277.25" stroke="#e7e7e7" stroke-width="0.85"/>
<text x="752.30" y="281.17" text-anchor="end" font-size="10.20" fill="#666" font-weight="400">95</text>
<line x1="761.50" y1="169.50" x2="761.50" y2="284.05" stroke="#e7e7e7" stroke-width="0.85"/>
<line x1="798.00" y1="169.50" x2="798.00" y2="284.05" stroke="#e7e7e7" stroke-width="0.85"/>
<line x1="834.50" y1="169.50" x2="834.50" y2="284.05" stroke="#e7e7e7" stroke-width="0.85"/>
<line x1="871.00" y1="169.50" x2="871.00" y2="284.05" stroke="#e7e7e7" stroke-width="0.85"/>
<line x1="907.50" y1="169.50" x2="907.50" y2="284.05" stroke="#e7e7e7" stroke-width="0.85"/>
<line x1="944.00" y1="169.50" x2="944.00" y2="284.05" stroke="#e7e7e7" stroke-width="0.85"/>
<line x1="980.50" y1="169.50" x2="980.50" y2="284.05" stroke="#e7e7e7" stroke-width="0.85"/>
<line x1="1017.00" y1="169.50" x2="1017.00" y2="284.05" stroke="#e7e7e7" stroke-width="0.85"/>
<line x1="1053.50" y1="169.50" x2="1053.50" y2="284.05" stroke="#e7e7e7" stroke-width="0.85"/>
<line x1="1090.00" y1="169.50" x2="1090.00" y2="284.05" stroke="#e7e7e7" stroke-width="0.85"/>
<line x1="1126.50" y1="169.50" x2="1126.50" y2="284.05" stroke="#e7e7e7" stroke-width="0.85"/>
<line x1="1163.00" y1="169.50" x2="1163.00" y2="284.05" stroke="#e7e7e7" stroke-width="0.85"/>
<line x1="1199.50" y1="169.50" x2="1199.50" y2="284.05" stroke="#e7e7e7" stroke-width="0.85"/>
<text x="779.75" y="295.62" text-anchor="middle" font-size="10.20" fill="#666"><tspan>12</tspan><tspan textLength="8.00" lengthAdjust="spacingAndGlyphs">월</tspan></text>
<text x="816.25" y="295.62" text-anchor="middle" font-size="10.20" fill="#666"><tspan>1</tspan><tspan textLength="8.00" lengthAdjust="spacingAndGlyphs">월</tspan></text>
<text x="852.75" y="295.62" text-anchor="middle" font-size="10.20" fill="#666"><tspan>2</tspan><tspan textLength="8.00" lengthAdjust="spacingAndGlyphs">월</tspan></text>
<text x="889.25" y="295.62" text-anchor="middle" font-size="10.20" fill="#666"><tspan>3</tspan><tspan textLength="8.00" lengthAdjust="spacingAndGlyphs">월</tspan></text>
<text x="925.75" y="295.62" text-anchor="middle" font-size="10.20" fill="#666"><tspan>4</tspan><tspan textLength="8.00" lengthAdjust="spacingAndGlyphs">월</tspan></text>
<text x="962.25" y="295.62" text-anchor="middle" font-size="10.20" fill="#666"><tspan>5</tspan><tspan textLength="8.00" lengthAdjust="spacingAndGlyphs">월</tspan></text>
<text x="998.75" y="295.62" text-anchor="middle" font-size="10.20" fill="#666"><tspan>6</tspan><tspan textLength="8.00" lengthAdjust="spacingAndGlyphs">월</tspan></text>
<text x="1035.25" y="295.62" text-anchor="middle" font-size="10.20" fill="#666"><tspan>7</tspan><tspan textLength="8.00" lengthAdjust="spacingAndGlyphs">월</tspan></text>
<text x="1071.75" y="295.62" text-anchor="middle" font-size="10.20" fill="#666"><tspan>8</tspan><tspan textLength="8.00" lengthAdjust="spacingAndGlyphs">월</tspan></text>
<text x="1108.25" y="295.62" text-anchor="middle" font-size="10.20" fill="#666"><tspan>9</tspan><tspan textLength="8.00" lengthAdjust="spacingAndGlyphs">월</tspan></text>
<text x="1144.75" y="295.62" text-anchor="middle" font-size="10.20" fill="#666"><tspan>10</tspan><tspan textLength="8.00" lengthAdjust="spacingAndGlyphs">월</tspan></text>
<text x="1181.25" y="295.62" text-anchor="middle" font-size="10.20" fill="#666"><tspan>11</tspan><tspan textLength="8.00" lengthAdjust="spacingAndGlyphs">월</tspan></text>
<rect x="765.81" y="225.80" width="5.97" height="51.45" fill="#6a84ea" stroke="#5a76e9" stroke-width="0.6"/>
<rect x="773.11" y="239.30" width="5.97" height="37.95" fill="#f5a31a" stroke="#f59e0b" stroke-width="0.6"/>
<rect x="780.41" y="229.55" width="5.97" height="47.70" fill="#1dbb88" stroke="#10b981" stroke-width="0.6"/>
<rect x="787.71" y="210.30" width="5.97" height="66.95" fill="#ef4b4b" stroke="#ea3e3e" stroke-width="0.6"/>
<rect x="802.31" y="192.80" width="5.97" height="84.45" fill="#6a84ea" stroke="#5a76e9" stroke-width="0.6"/>
<rect x="809.61" y="213.55" width="5.97" height="63.70" fill="#f5a31a" stroke="#f59e0b" stroke-width="0.6"/>
<rect x="816.91" y="205.80" width="5.97" height="71.45" fill="#1dbb88" stroke="#10b981" stroke-width="0.6"/>
<rect x="824.21" y="213.55" width="5.97" height="63.70" fill="#ef4b4b" stroke="#ea3e3e" stroke-width="0.6"/>
<rect x="838.81" y="215.30" width="5.97" height="61.95" fill="#6a84ea" stroke="#5a76e9" stroke-width="0.6"/>
<rect x="846.11" y="208.55" width="5.97" height="68.70" fill="#f5a31a" stroke="#f59e0b" stroke-width="0.6"/>
<rect x="853.41" y="215.80" width="5.97" height="61.45" fill="#1dbb88" stroke="#10b981" stroke-width="0.6"/>
<rect x="860.71" y="219.55" width="5.97" height="57.70" fill="#ef4b4b" stroke="#ea3e3e" stroke-width="0.6"/>
<rect x="875.31" y="214.30" width="5.97" height="62.95" fill="#6a84ea" stroke="#5a76e9" stroke-width="0.6"/>
<rect x="882.61" y="228.80" width="5.97" height="48.45" fill="#f5a31a" stroke="#f59e0b" stroke-width="0.6"/>
<rect x="889.91" y="238.30" width="5.97" height="38.95" fill="#1dbb88" stroke="#10b981" stroke-width="0.6"/>
<rect x="897.21" y="184.80" width="5.97" height="92.45" fill="#ef4b4b" stroke="#ea3e3e" stroke-width="0.6"/>
<rect x="911.81" y="179.05" width="5.97" height="98.20" fill="#6a84ea" stroke="#5a76e9" stroke-width="0.6"/>
<rect x="919.11" y="226.55" width="5.97" height="50.70" fill="#f5a31a" stroke="#f59e0b" stroke-width="0.6"/>
<rect x="926.41" y="245.30" width="5.97" height="31.95" fill="#1dbb88" stroke="#10b981" stroke-width="0.6"/>
<rect x="933.71" y="209.55" width="5.97" height="67.70" fill="#ef4b4b" stroke="#ea3e3e" stroke-width="0.6"/>
<rect x="948.31" y="202.80" width="5.97" height="74.45" fill="#6a84ea" stroke="#5a76e9" stroke-width="0.6"/>
<rect x="955.61" y="221.55" width="5.97" height="55.70" fill="#f5a31a" stroke="#f59e0b" stroke-width="0.6"/>
<rect x="962.91" y="233.05" width="5.97" height="44.20" fill="#1dbb88" stroke="#10b981" stroke-width="0.6"/>
<rect x="970.21" y="211.05" width="5.97" height="66.20" fill="#ef4b4b" stroke="#ea3e3e" stroke-width="0.6"/>
<rect x="984.81" y="212.80" width="5.97" height="64.45" fill="#6a84ea" stroke="#5a76e9" stroke-width="0.6"/>
<rect x="992.11" y="248.30" width="5.97" height="28.95" fill="#f5a31a" stroke="#f59e0b" stroke-width="0.6"/>
<rect x="999.41" y="258.30" width="5.97" height="18.95" fill="#1dbb88" stroke="#10b981" stroke-width="0.6"/>
<rect x="1006.71" y="209.55" width="5.97" height="67.70" fill="#ef4b4b" stroke="#ea3e3e" stroke-width="0.6"/>
<rect x="1021.31" y="196.55" width="5.97" height="80.70" fill="#6a84ea" stroke="#5a76e9" stroke-width="0.6"/>
<rect x="1028.62" y="245.30" width="5.97" height="31.95" fill="#f5a31a" stroke="#f59e0b" stroke-width="0.6"/>
<rect x="1035.91" y="218.05" width="5.97" height="59.20" fill="#1dbb88" stroke="#10b981" stroke-width="0.6"/>
<rect x="1043.21" y="239.55" width="5.97" height="37.70" fill="#ef4b4b" stroke="#ea3e3e" stroke-width="0.6"/>
<rect x="1057.82" y="222.30" width="5.97" height="54.95" fill="#6a84ea" stroke="#5a76e9" stroke-width="0.6"/>
<rect x="1065.12" y="223.80" width="5.97" height="53.45" fill="#f5a31a" stroke="#f59e0b" stroke-width="0.6"/>
<rect x="1072.41" y="246.05" width="5.97" height="31.20" fill="#1dbb88" stroke="#10b981" stroke-width="0.6"/>
<rect x="1079.72" y="195.80" width="5.97" height="81.45" fill="#ef4b4b" stroke="#ea3e3e" stroke-width="0.6"/>
<rect x="1094.32" y="213.55" width="5.97" height="63.70" fill="#6a84ea" stroke="#5a76e9" stroke-width="0.6"/>
<rect x="1101.62" y="225.80" width="5.97" height="51.45" fill="#f5a31a" stroke="#f59e0b" stroke-width="0.6"/>
<rect x="1108.91" y="250.30" width="5.97" height="26.95" fill="#1dbb88" stroke="#10b981" stroke-width="0.6"/>
<rect x="1116.22" y="209.30" width="5.97" height="67.95" fill="#ef4b4b" stroke="#ea3e3e" stroke-width="0.6"/>
<rect x="1130.82" y="170.55" width="5.97" height="106.70" fill="#6a84ea" stroke="#5a76e9" stroke-width="0.6"/>
<rect x="1138.12" y="246.05" width="5.97" height="31.20" fill="#f5a31a" stroke="#f59e0b" stroke-width="0.6"/>
<rect x="1145.41" y="255.30" width="5.97" height="21.95" fill="#1dbb88" stroke="#10b981" stroke-width="0.6"/>
<rect x="1152.72" y="204.30" width="5.97" height="72.95" fill="#ef4b4b" stroke="#ea3e3e" stroke-width="0.6"/>
<rect x="1167.32" y="172.55" width="5.97" height="104.70" fill="#6a84ea" stroke="#5a76e9" stroke-width="0.6"/>
<rect x="1174.62" y="206.55" width="5.97" height="70.70" fill="#f5a31a" stroke="#f59e0b" stroke-width="0.6"/>
<rect x="1181.91" y="231.05" width="5.97" height="46.20" fill="#1dbb88" stroke="#10b981" stroke-width="0.6"/>
<rect x="1189.22" y="225.80" width="5.97" height="51.45" fill="#ef4b4b" stroke="#ea3e3e" stroke-width="0.6"/>
<rect x="847.50" y="309.3" width="33" height="8.6" fill="#6a84ea" stroke="#5a76e9" stroke-width="0.6"/>
<text x="885.00" y="317.12" text-anchor="start" font-size="10.20" fill="#666" font-weight="400" textLength="16.00" lengthAdjust="spacingAndGlyphs">서울</text>
<rect x="909.15" y="309.3" width="33" height="8.6" fill="#f5a31a" stroke="#f59e0b" stroke-width="0.6"/>
<text x="946.65" y="317.12" text-anchor="start" font-size="10.20" fill="#666" font-weight="400" textLength="16.00" lengthAdjust="spacingAndGlyphs">부산</text>
<rect x="970.80" y="309.3" width="33" height="8.6" fill="#1dbb88" stroke="#10b981" stroke-width="0.6"/>
<text x="1008.30" y="317.12" text-anchor="start" font-size="10.20" fill="#666" font-weight="400" textLength="16.00" lengthAdjust="spacingAndGlyphs">대구</text>
<rect x="1032.45" y="309.3" width="33" height="8.6" fill="#ef4b4b" stroke="#ea3e3e" stroke-width="0.6"/>
<text x="1069.95" y="317.12" text-anchor="start" font-size="10.20" fill="#666" font-weight="400" textLength="16.00" lengthAdjust="spacingAndGlyphs">인천</text>
<line x1="273.50" y1="407.25" x2="273.50" y2="515.25" stroke="rgba(0,0,0,0.10)" stroke-width="0.85"/>
<line x1="273.50" y1="515.25" x2="691.75" y2="515.25" stroke="rgba(0,0,0,0.10)" stroke-width="0.85"/>
<line x1="266.70" y1="407.25" x2="691.75" y2="407.25" stroke="#e7e7e7" stroke-width="0.85"/>
<text x="264.30" y="411.17" text-anchor="end" font-size="10.20" fill="#666" font-weight="400">5%</text>
<line x1="266.70" y1="428.85" x2="691.75" y2="428.85" stroke="#e7e7e7" stroke-width="0.85"/>
<text x="264.30" y="432.77" text-anchor="end" font-size="10.20" fill="#666" font-weight="400">4.5%</text>
<line x1="266.70" y1="450.45" x2="691.75" y2="450.45" stroke="#e7e7e7" stroke-width="0.85"/>
<text x="264.30" y="454.37" text-anchor="end" font-size="10.20" fill="#666" font-weight="400">4%</text>
<line x1="266.70" y1="472.05" x2="691.75" y2="472.05" stroke="#e7e7e7" stroke-width="0.85"/>
<text x="264.30" y="475.97" text-anchor="end" font-size="10.20" fill="#666" font-weight="400">3.5%</text>
<line x1="266.70" y1="493.65" x2="691.75" y2="493.65" stroke="#e7e7e7" stroke-width="0.85"/>
<text x="264.30" y="497.57" text-anchor="end" font-size="10.20" fill="#666" font-weight="400">3%</text>
<line x1="266.70" y1="515.25" x2="691.75" y2="515.25" stroke="#e7e7e7" stroke-width="0.85"/>
<text x="264.30" y="519.17" text-anchor="end" font-size="10.20" fill="#666" font-weight="400">2.5%</text>
<line x1="273.50" y1="407.25" x2="273.50" y2="522.05" stroke="#e7e7e7" stroke-width="0.85"/>
<text x="273.50" y="533.32" text-anchor="middle" font-size="10.20" fill="#666"><tspan>12</tspan><tspan textLength="8.00" lengthAdjust="spacingAndGlyphs">월</tspan></text>
<line x1="311.52" y1="407.25" x2="311.52" y2="522.05" stroke="#e7e7e7" stroke-width="0.85"/>
<text x="311.52" y="533.32" text-anchor="middle" font-size="10.20" fill="#666"><tspan>1</tspan><tspan textLength="8.00" lengthAdjust="spacingAndGlyphs">월</tspan></text>
<line x1="349.55" y1="407.25" x2="349.55" y2="522.05" stroke="#e7e7e7" stroke-width="0.85"/>
<text x="349.55" y="533.32" text-anchor="middle" font-size="10.20" fill="#666"><tspan>2</tspan><tspan textLength="8.00" lengthAdjust="spacingAndGlyphs">월</tspan></text>
<line x1="387.57" y1="407.25" x2="387.57" y2="522.05" stroke="#e7e7e7" stroke-width="0.85"/>
<text x="387.57" y="533.32" text-anchor="middle" font-size="10.20" fill="#666"><tspan>3</tspan><tspan textLength="8.00" lengthAdjust="spacingAndGlyphs">월</tspan></text>
<line x1="425.59" y1="407.25" x2="425.59" y2="522.05" stroke="#e7e7e7" stroke-width="0.85"/>
<text x="425.59" y="533.32" text-anchor="middle" font-size="10.20" fill="#666"><tspan>4</tspan><tspan textLength="8.00" lengthAdjust="spacingAndGlyphs">월</tspan></text>
<line x1="463.61" y1="407.25" x2="463.61" y2="522.05" stroke="#e7e7e7" stroke-width="0.85"/>
<text x="463.61" y="533.32" text-anchor="middle" font-size="10.20" fill="#666"><tspan>5</tspan><tspan textLength="8.00" lengthAdjust="spacingAndGlyphs">월</tspan></text>
<line x1="501.64" y1="407.25" x2="501.64" y2="522.05" stroke="#e7e7e7" stroke-width="0.85"/>
<text x="501.64" y="533.32" text-anchor="middle" font-size="10.20" fill="#666"><tspan>6</tspan><tspan textLength="8.00" lengthAdjust="spacingAndGlyphs">월</tspan></text>
<line x1="539.66" y1="407.25" x2="539.66" y2="522.05" stroke="#e7e7e7" stroke-width="0.85"/>
<text x="539.66" y="533.32" text-anchor="middle" font-size="10.20" fill="#666"><tspan>7</tspan><tspan textLength="8.00" lengthAdjust="spacingAndGlyphs">월</tspan></text>
<line x1="577.68" y1="407.25" x2="577.68" y2="522.05" stroke="#e7e7e7" stroke-width="0.85"/>
<text x="577.68" y="533.32" text-anchor="middle" font-size="10.20" fill="#666"><tspan>8</tspan><tspan textLength="8.00" lengthAdjust="spacingAndGlyphs">월</tspan></text>
<line x1="615.70" y1="407.25" x2="615.70" y2="522.05" stroke="#e7e7e7" stroke-width="0.85"/>
<text x="615.70" y="533.32" text-anchor="middle" font-size="10.20" fill="#666"><tspan>9</tspan><tspan textLength="8.00" lengthAdjust="spacingAndGlyphs">월</tspan></text>
<line x1="653.73" y1="407.25" x2="653.73" y2="522.05" stroke="#e7e7e7" stroke-width="0.85"/>
<text x="653.73" y="533.32" text-anchor="middle" font-size="10.20" fill="#666"><tspan>10</tspan><tspan textLength="8.00" lengthAdjust="spacingAndGlyphs">월</tspan></text>
<line x1="691.75" y1="407.25" x2="691.75" y2="522.05" stroke="#e7e7e7" stroke-width="0.85"/>
<text x="691.75" y="533.32" text-anchor="middle" font-size="10.20" fill="#666"><tspan>11</tspan><tspan textLength="8.00" lengthAdjust="spacingAndGlyphs">월</tspan></text>
<path d="M273.50 484.50 C288.71 480.00 296.25 473.50 311.52 473.25 C326.67 473.00 335.33 485.82 349.55 483.25 C365.75 480.32 371.73 461.11 387.57 459.50 C402.14 458.01 409.92 473.80 425.59 475.50 C440.34 477.10 448.27 469.82 463.61 467.75 C478.68 465.72 486.85 463.16 501.64 465.25 C517.26 467.46 524.06 476.65 539.66 478.50 C554.48 480.25 562.52 476.29 577.68 474.25 C592.94 472.19 600.48 470.55 615.70 468.25 C630.90 465.95 639.15 460.50 653.73 462.75 C669.57 465.20 676.54 473.10 691.75 480.00" fill="none" stroke="#5a76e9" stroke-width="2.5" stroke-linecap="round"/>
<path d="M273.50 449.00 C288.71 451.40 296.23 454.15 311.52 455.00 C326.65 455.85 334.33 453.85 349.55 453.25 C364.75 452.65 373.26 455.95 387.57 452.00 C403.68 447.55 409.51 435.69 425.59 432.25 C439.92 429.19 448.60 433.18 463.61 435.75 C479.02 438.38 486.37 441.69 501.64 445.25 C516.79 448.79 525.62 456.55 539.66 453.50 C556.03 449.95 561.54 431.30 577.68 428.75 C591.95 426.50 600.40 436.72 615.70 441.50 C630.81 446.22 638.26 451.13 653.73 452.50 C668.68 453.83 676.54 449.95 691.75 448.25" fill="none" stroke="#f59e0b" stroke-width="2.5" stroke-linecap="round"/>
<path d="M273.50 435.75 C288.71 432.75 296.30 428.30 311.52 428.25 C326.72 428.20 334.77 437.05 349.55 435.50 C365.19 433.85 371.79 423.59 387.57 420.25 C402.21 417.15 410.82 416.97 425.59 419.40 C441.24 421.97 448.00 429.19 463.61 432.75 C478.42 436.13 486.48 437.15 501.64 436.75 C516.90 436.35 524.65 434.06 539.66 430.75 C555.07 427.36 562.84 418.88 577.68 420.00 C593.25 421.18 600.50 436.50 615.70 436.50 C630.91 436.50 638.56 419.90 653.73 420.00 C668.97 420.10 676.54 430.20 691.75 437.00" fill="none" stroke="#10b981" stroke-width="2.5" stroke-linecap="round"/>
<path d="M273.50 495.25 C288.71 495.95 296.45 498.14 311.52 497.00 C326.87 495.84 334.24 490.15 349.55 489.50 C364.66 488.85 372.45 491.46 387.57 493.75 C402.87 496.06 410.42 501.20 425.59 501.00 C440.84 500.80 449.15 490.53 463.61 492.75 C479.57 495.21 485.86 511.04 501.64 512.70 C516.28 514.24 524.11 503.65 539.66 500.75 C554.52 497.97 562.56 497.70 577.68 498.50 C592.98 499.30 600.59 501.77 615.70 504.75 C631.01 507.77 638.61 513.90 653.73 513.50 C669.03 513.10 676.54 507.05 691.75 502.75" fill="none" stroke="#ef4444" stroke-width="2.5" stroke-linecap="round"/>
<circle cx="273.50" cy="484.50" r="2.3" fill="rgba(88,114,229,0.12)" stroke="#5a76e9" stroke-width="0.85"/>
<circle cx="311.52" cy="473.25" r="2.3" fill="rgba(88,114,229,0.12)" stroke="#5a76e9" stroke-width="0.85"/>
<circle cx="349.55" cy="483.25" r="2.3" fill="rgba(88,114,229,0.12)" stroke="#5a76e9" stroke-width="0.85"/>
<circle cx="387.57" cy="459.50" r="2.3" fill="rgba(88,114,229,0.12)" stroke="#5a76e9" stroke-width="0.85"/>
<circle cx="425.59" cy="475.50" r="2.3" fill="rgba(88,114,229,0.12)" stroke="#5a76e9" stroke-width="0.85"/>
<circle cx="463.61" cy="467.75" r="2.3" fill="rgba(88,114,229,0.12)" stroke="#5a76e9" stroke-width="0.85"/>
<circle cx="501.64" cy="465.25" r="2.3" fill="rgba(88,114,229,0.12)" stroke="#5a76e9" stroke-width="0.85"/>
<circle cx="539.66" cy="478.50" r="2.3" fill="rgba(88,114,229,0.12)" stroke="#5a76e9" stroke-width="0.85"/>
<circle cx="577.68" cy="474.25" r="2.3" fill="rgba(88,114,229,0.12)" stroke="#5a76e9" stroke-width="0.85"/>
<circle cx="615.70" cy="468.25" r="2.3" fill="rgba(88,114,229,0.12)" stroke="#5a76e9" stroke-width="0.85"/>
<circle cx="653.73" cy="462.75" r="2.3" fill="rgba(88,114,229,0.12)" stroke="#5a76e9" stroke-width="0.85"/>
<circle cx="691.75" cy="480.00" r="2.3" fill="rgba(88,114,229,0.12)" stroke="#5a76e9" stroke-width="0.85"/>
<circle cx="273.50" cy="449.00" r="2.3" fill="rgba(245,158,11,0.12)" stroke="#f59e0b" stroke-width="0.85"/>
<circle cx="311.52" cy="455.00" r="2.3" fill="rgba(245,158,11,0.12)" stroke="#f59e0b" stroke-width="0.85"/>
<circle cx="349.55" cy="453.25" r="2.3" fill="rgba(245,158,11,0.12)" stroke="#f59e0b" stroke-width="0.85"/>
<circle cx="387.57" cy="452.00" r="2.3" fill="rgba(245,158,11,0.12)" stroke="#f59e0b" stroke-width="0.85"/>
<circle cx="425.59" cy="432.25" r="2.3" fill="rgba(245,158,11,0.12)" stroke="#f59e0b" stroke-width="0.85"/>
<circle cx="463.61" cy="435.75" r="2.3" fill="rgba(245,158,11,0.12)" stroke="#f59e0b" stroke-width="0.85"/>
<circle cx="501.64" cy="445.25" r="2.3" fill="rgba(245,158,11,0.12)" stroke="#f59e0b" stroke-width="0.85"/>
<circle cx="539.66" cy="453.50" r="2.3" fill="rgba(245,158,11,0.12)" stroke="#f59e0b" stroke-width="0.85"/>
<circle cx="577.68" cy="428.75" r="2.3" fill="rgba(245,158,11,0.12)" stroke="#f59e0b" stroke-width="0.85"/>
<circle cx="615.70" cy="441.50" r="2.3" fill="rgba(245,158,11,0.12)" stroke="#f59e0b" stroke-width="0.85"/>
<circle cx="653.73" cy="452.50" r="2.3" fill="rgba(245,158,11,0.12)" stroke="#f59e0b" stroke-width="0.85"/>
<circle cx="691.75" cy="448.25" r="2.3" fill="rgba(245,158,11,0.12)" stroke="#f59e0b" stroke-width="0.85"/>
<circle cx="273.50" cy="435.75" r="2.3" fill="rgba(16,185,129,0.12)" stroke="#10b981" stroke-width="0.85"/>
<circle cx="311.52" cy="428.25" r="2.3" fill="rgba(16,185,129,0.12)" stroke="#10b981" stroke-width="0.85"/>
<circle cx="349.55" cy="435.50" r="2.3" fill="rgba(16,185,129,0.12)" stroke="#10b981" stroke-width="0.85"/>
<circle cx="387.57" cy="420.25" r="2.3" fill="rgba(16,185,129,0.12)" stroke="#10b981" stroke-width="0.85"/>
<circle cx="425.59" cy="419.40" r="2.3" fill="rgba(16,185,129,0.12)" stroke="#10b981" stroke-width="0.85"/>
<circle cx="463.61" cy="432.75" r="2.3" fill="rgba(16,185,129,0.12)" stroke="#10b981" stroke-width="0.85"/>
<circle cx="501.64" cy="436.75" r="2.3" fill="rgba(16,185,129,0.12)" stroke="#10b981" stroke-width="0.85"/>
<circle cx="539.66" cy="430.75" r="2.3" fill="rgba(16,185,129,0.12)" stroke="#10b981" stroke-width="0.85"/>
<circle cx="577.68" cy="420.00" r="2.3" fill="rgba(16,185,129,0.12)" stroke="#10b981" stroke-width="0.85"/>
<circle cx="615.70" cy="436.50" r="2.3" fill="rgba(16,185,129,0.12)" stroke="#10b981" stroke-width="0.85"/>
<circle cx="653.73" cy="420.00" r="2.3" fill="rgba(16,185,129,0.12)" stroke="#10b981" stroke-width="0.85"/>
<circle cx="691.75" cy="437.00" r="2.3" fill="rgba(16,185,129,0.12)" stroke="#10b981" stroke-width="0.85"/>
<circle cx="273.50" cy="495.25" r="2.3" fill="rgba(239,68,68,0.12)" stroke="#ef4444" stroke-width="0.85"/>
<circle cx="311.52" cy="497.00" r="2.3" fill="rgba(239,68,68,0.12)" stroke="#ef4444" stroke-width="0.85"/>
<circle cx="349.55" cy="489.50" r="2.3" fill="rgba(239,68,68,0.12)" stroke="#ef4444" stroke-width="0.85"/>
<circle cx="387.57" cy="493.75" r="2.3" fill="rgba(239,68,68,0.12)" stroke="#ef4444" stroke-width="0.85"/>
<circle cx="425.59" cy="501.00" r="2.3" fill="rgba(239,68,68,0.12)" stroke="#ef4444" stroke-width="0.85"/>
<circle cx="463.61" cy="492.75" r="2.3" fill="rgba(239,68,68,0.12)" stroke="#ef4444" stroke-width="0.85"/>
<circle cx="501.64" cy="512.70" r="2.3" fill="rgba(239,68,68,0.12)" stroke="#ef4444" stroke-width="0.85"/>
<circle cx="539.66" cy="500.75" r="2.3" fill="rgba(239,68,68,0.12)" stroke="#ef4444" stroke-width="0.85"/>
<circle cx="577.68" cy="498.50" r="2.3" fill="rgba(239,68,68,0.12)" stroke="#ef4444" stroke-width="0.85"/>
<circle cx="615.70" cy="504.75" r="2.3" fill="rgba(239,68,68,0.12)" stroke="#ef4444" stroke-width="0.85"/>
<circle cx="653.73" cy="513.50" r="2.3" fill="rgba(239,68,68,0.12)" stroke="#ef4444" stroke-width="0.85"/>
<circle cx="691.75" cy="502.75" r="2.3" fill="rgba(239,68,68,0.12)" stroke="#ef4444" stroke-width="0.85"/>
<rect x="313.00" y="547.00" width="33.00" height="8.75" fill="#e8ecfc" stroke="#5a76e9" stroke-width="2.00"/>
<text x="350.75" y="554.92" text-anchor="start" font-size="10.20" fill="#666" font-weight="400" textLength="31.30" lengthAdjust="spacingAndGlyphs">기준금리</text>
<rect x="390.00" y="547.00" width="33.00" height="8.75" fill="#fef1dc" stroke="#f59e0b" stroke-width="2.00"/>
<text x="428.00" y="554.92" text-anchor="start" font-size="10.20" fill="#666" font-weight="400" textLength="46.80" lengthAdjust="spacingAndGlyphs">주택담보대출</text>
<rect x="483.20" y="547.00" width="33.00" height="8.75" fill="#dcf5ec" stroke="#10b981" stroke-width="2.00"/>
<text x="521.25" y="554.92" text-anchor="start" font-size="10.20" fill="#666" font-weight="400" textLength="30.40" lengthAdjust="spacingAndGlyphs">기업대출</text>
<rect x="560.50" y="547.00" width="33.00" height="8.75" fill="#fde3e3" stroke="#ef4444" stroke-width="2.00"/>
<text x="598.00" y="554.92" text-anchor="start" font-size="10.20" fill="#666" font-weight="400" textLength="31.00" lengthAdjust="spacingAndGlyphs">예금금리</text>
<polygon points="966.40,448.70 980.26,454.44 986.00,468.30 980.26,482.16 966.40,487.90 952.54,482.16 946.80,468.30 952.54,454.44" fill="none" stroke="#e7e7e7" stroke-width="0.85"/>
<polygon points="966.40,429.20 994.05,440.65 1005.50,468.30 994.05,495.95 966.40,507.40 938.75,495.95 927.30,468.30 938.75,440.65" fill="none" stroke="#e7e7e7" stroke-width="0.85"/>
<polygon points="966.40,419.40 1000.98,433.72 1015.30,468.30 1000.98,502.88 966.40,517.20 931.82,502.88 917.50,468.30 931.82,433.72" fill="none" stroke="#e7e7e7" stroke-width="0.85"/>
<line x1="966.40" y1="468.30" x2="966.40" y2="419.40" stroke="#e7e7e7" stroke-width="0.85"/>
<line x1="966.40" y1="468.30" x2="1000.98" y2="433.72" stroke="#e7e7e7" stroke-width="0.85"/>
<line x1="966.40" y1="468.30" x2="1015.30" y2="468.30" stroke="#e7e7e7" stroke-width="0.85"/>
<line x1="966.40" y1="468.30" x2="1000.98" y2="502.88" stroke="#e7e7e7" stroke-width="0.85"/>
<line x1="966.40" y1="468.30" x2="966.40" y2="517.20" stroke="#e7e7e7" stroke-width="0.85"/>
<line x1="966.40" y1="468.30" x2="931.82" y2="502.88" stroke="#e7e7e7" stroke-width="0.85"/>
<line x1="966.40" y1="468.30" x2="917.50" y2="468.30" stroke="#e7e7e7" stroke-width="0.85"/>
<line x1="966.40" y1="468.30" x2="931.82" y2="433.72" stroke="#e7e7e7" stroke-width="0.85"/>
<rect x="955.90" y="443.20" width="21" height="11" fill="rgba(255,255,255,0.75)"/>
<text x="966.40" y="452.62" text-anchor="middle" font-size="10.20" fill="#555" font-weight="400">100</text>
<rect x="955.90" y="423.70" width="21" height="11" fill="rgba(255,255,255,0.75)"/>
<text x="966.40" y="433.12" text-anchor="middle" font-size="10.20" fill="#555" font-weight="400">120</text>
<rect x="955.90" y="413.90" width="21" height="11" fill="rgba(255,255,255,0.75)"/>
<text x="966.40" y="423.32" text-anchor="middle" font-size="10.20" fill="#555" font-weight="400">130</text>
<polygon points="966.40,458.80 978.35,456.35 979.30,468.30 974.89,476.79 966.40,480.70 952.89,481.81 960.60,468.30 943.77,445.67" fill="rgba(88,114,229,0.2)" stroke="#5a76e9" stroke-width="2.5" stroke-linejoin="miter" stroke-miterlimit="10"/>
<circle cx="966.40" cy="458.80" r="2.3" fill="#5a76e9" stroke="#fff" stroke-width="1"/>
<circle cx="978.35" cy="456.35" r="2.3" fill="#5a76e9" stroke="#fff" stroke-width="1"/>
<circle cx="979.30" cy="468.30" r="2.3" fill="#5a76e9" stroke="#fff" stroke-width="1"/>
<circle cx="974.89" cy="476.79" r="2.3" fill="#5a76e9" stroke="#fff" stroke-width="1"/>
<circle cx="966.40" cy="480.70" r="2.3" fill="#5a76e9" stroke="#fff" stroke-width="1"/>
<circle cx="952.89" cy="481.81" r="2.3" fill="#5a76e9" stroke="#fff" stroke-width="1"/>
<circle cx="960.60" cy="468.30" r="2.3" fill="#5a76e9" stroke="#fff" stroke-width="1"/>
<circle cx="943.77" cy="445.67" r="2.3" fill="#5a76e9" stroke="#fff" stroke-width="1"/>
<text x="966.75" y="406.05" text-anchor="middle" font-size="8.60" fill="#666" font-weight="400" textLength="15.00" lengthAdjust="spacingAndGlyphs">식품</text>
<text x="1015.60" y="424.25" text-anchor="middle" font-size="8.60" fill="#666" font-weight="400" textLength="15.00" lengthAdjust="spacingAndGlyphs">주거</text>
<text x="1032.80" y="471.45" text-anchor="middle" font-size="8.60" fill="#666" font-weight="400" textLength="15.00" lengthAdjust="spacingAndGlyphs">교통</text>
<text x="1015.60" y="517.75" text-anchor="middle" font-size="8.60" fill="#666" font-weight="400" textLength="15.00" lengthAdjust="spacingAndGlyphs">의료</text>
<text x="966.75" y="535.55" text-anchor="middle" font-size="8.60" fill="#666" font-weight="400" textLength="15.00" lengthAdjust="spacingAndGlyphs">교육</text>
<text x="917.20" y="517.75" text-anchor="middle" font-size="8.60" fill="#666" font-weight="400" textLength="15.00" lengthAdjust="spacingAndGlyphs">오락</text>
<text x="899.80" y="471.45" text-anchor="middle" font-size="8.60" fill="#666" font-weight="400" textLength="15.00" lengthAdjust="spacingAndGlyphs">통신</text>
<text x="917.20" y="424.25" text-anchor="middle" font-size="8.60" fill="#666" font-weight="400" textLength="15.00" lengthAdjust="spacingAndGlyphs">의류</text>
<rect x="917.80" y="546.90" width="32.60" height="8.80" fill="#dfe4fa" stroke="#5a76e9" stroke-width="2.40"/>
<text x="955.30" y="554.92" text-anchor="start" font-size="10.20" fill="#666" font-weight="400" textLength="60.00" lengthAdjust="spacingAndGlyphs">소비자 물가 지수</text>
</svg>
<div class="abs" style="left:1221px;top:604px;width:3px;height:4px;background:radial-gradient(circle at 0 0,rgba(0,0,0,0) 2.6px,#4a3a33 3.4px)"></div>
</body></html>
